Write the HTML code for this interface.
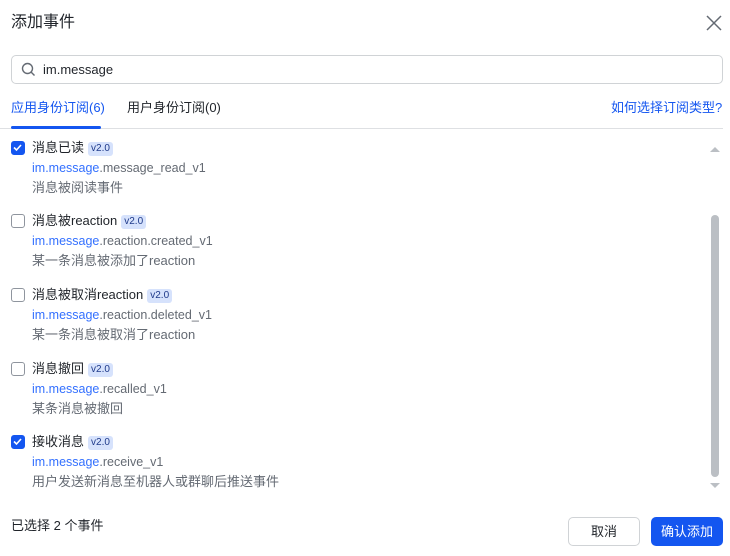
<!DOCTYPE html>
<html><head><meta charset="utf-8"><style>
*{margin:0;padding:0;box-sizing:border-box}
body{width:730px;height:556px;background:#fff;font-family:"Liberation Sans","Noto Sans CJK SC",sans-serif;color:#1f2329;position:relative;overflow:hidden}
.a{position:absolute;white-space:nowrap;line-height:20px}
.title{left:11px;top:13px;font-size:16px}
.search{left:11px;top:55px;width:712px;height:29px;border:1px solid #d0d3d6;border-radius:5px}
.tab{font-size:13px;top:98px}
.item .cb{position:absolute;left:11px;width:14px;height:14px;border:1.5px solid #8f959e;border-radius:3px}
.cb.on{background:#1456f0;border-color:#1456f0}
.t{font-size:13px;left:32px}
.tag{display:inline-block;font-size:10px;background:#d6e2fc;color:#1f3a8a;border-radius:3px;padding:1px 3px;margin-left:4px;vertical-align:1px;line-height:12px}
.c{font-size:12.5px;left:32px;color:#646a73}
.c b{font-weight:normal;color:#3370ff}
.d{font-size:13px;left:32px;color:#646a73}
.btn{top:517px;height:29px;border-radius:5px;font-size:13px;text-align:center;line-height:27px}
</style></head><body>
<div class="a title">添加事件</div>
<svg class="a" style="left:706px;top:15px" width="16" height="16"><path d="M1 1L15 15M15 1L1 15" stroke="#646a73" stroke-width="1.5"/></svg>
<div class="a search"></div>
<svg class="a" style="left:21px;top:62px" width="15" height="15"><circle cx="6.5" cy="6.5" r="5" fill="none" stroke="#646a73" stroke-width="1.4"/><path d="M10 10L13.5 13.5" stroke="#646a73" stroke-width="1.4"/></svg>
<div class="a" style="left:43px;top:60px;font-size:13px">im.message</div>
<div class="a tab" style="left:11px;color:#1456f0">应用身份订阅(6)</div>
<div class="a tab" style="left:127px">用户身份订阅(0)</div>
<div class="a tab" style="left:611px;color:#1456f0">如何选择订阅类型?</div>
<div class="a" style="left:0;top:128px;width:723px;height:1px;background:#dee0e3"></div>
<div class="a" style="left:11px;top:126px;width:90px;height:3px;background:#1456f0;border-radius:2px"></div>

<div class="item">
<div class="cb on" style="top:141px"><svg width="11" height="11" style="position:absolute;left:0;top:0"><path d="M2 5.5L4.5 8L9 3" stroke="#fff" stroke-width="1.6" fill="none"/></svg></div>
<div class="a t" style="top:138px">消息已读<span class="tag">v2.0</span></div>
<div class="a c" style="top:158px"><b>im.message</b>.message_read_v1</div>
<div class="a d" style="top:178px">消息被阅读事件</div>

<div class="cb" style="top:214px"></div>
<div class="a t" style="top:211px">消息被reaction<span class="tag">v2.0</span></div>
<div class="a c" style="top:231px"><b>im.message</b>.reaction.created_v1</div>
<div class="a d" style="top:251px">某一条消息被添加了reaction</div>

<div class="cb" style="top:288px"></div>
<div class="a t" style="top:285px">消息被取消reaction<span class="tag">v2.0</span></div>
<div class="a c" style="top:305px"><b>im.message</b>.reaction.deleted_v1</div>
<div class="a d" style="top:325px">某一条消息被取消了reaction</div>

<div class="cb" style="top:362px"></div>
<div class="a t" style="top:359px">消息撤回<span class="tag">v2.0</span></div>
<div class="a c" style="top:379px"><b>im.message</b>.recalled_v1</div>
<div class="a d" style="top:399px">某条消息被撤回</div>

<div class="cb on" style="top:435px"><svg width="11" height="11" style="position:absolute;left:0;top:0"><path d="M2 5.5L4.5 8L9 3" stroke="#fff" stroke-width="1.6" fill="none"/></svg></div>
<div class="a t" style="top:432px">接收消息<span class="tag">v2.0</span></div>
<div class="a c" style="top:452px"><b>im.message</b>.receive_v1</div>
<div class="a d" style="top:472px">用户发送新消息至机器人或群聊后推送事件</div>
</div>

<svg class="a" style="left:710px;top:146px" width="10" height="6"><path d="M0 6L5 1L10 6Z" fill="#bbbfc4"/></svg>
<div class="a" style="left:711px;top:215px;width:8px;height:262px;background:#bbbfc4;border-radius:4px"></div>
<svg class="a" style="left:710px;top:483px" width="10" height="6"><path d="M0 0L5 5L10 0Z" fill="#bbbfc4"/></svg>

<div class="a" style="left:11px;top:516px;font-size:13px">已选择 2 个事件</div>
<div class="a btn" style="left:568px;width:72px;border:1px solid #d0d3d6;line-height:27px">取消</div>
<div class="a btn" style="left:651px;width:72px;background:#1456f0;color:#fff;line-height:29px">确认添加</div>
</body></html>
